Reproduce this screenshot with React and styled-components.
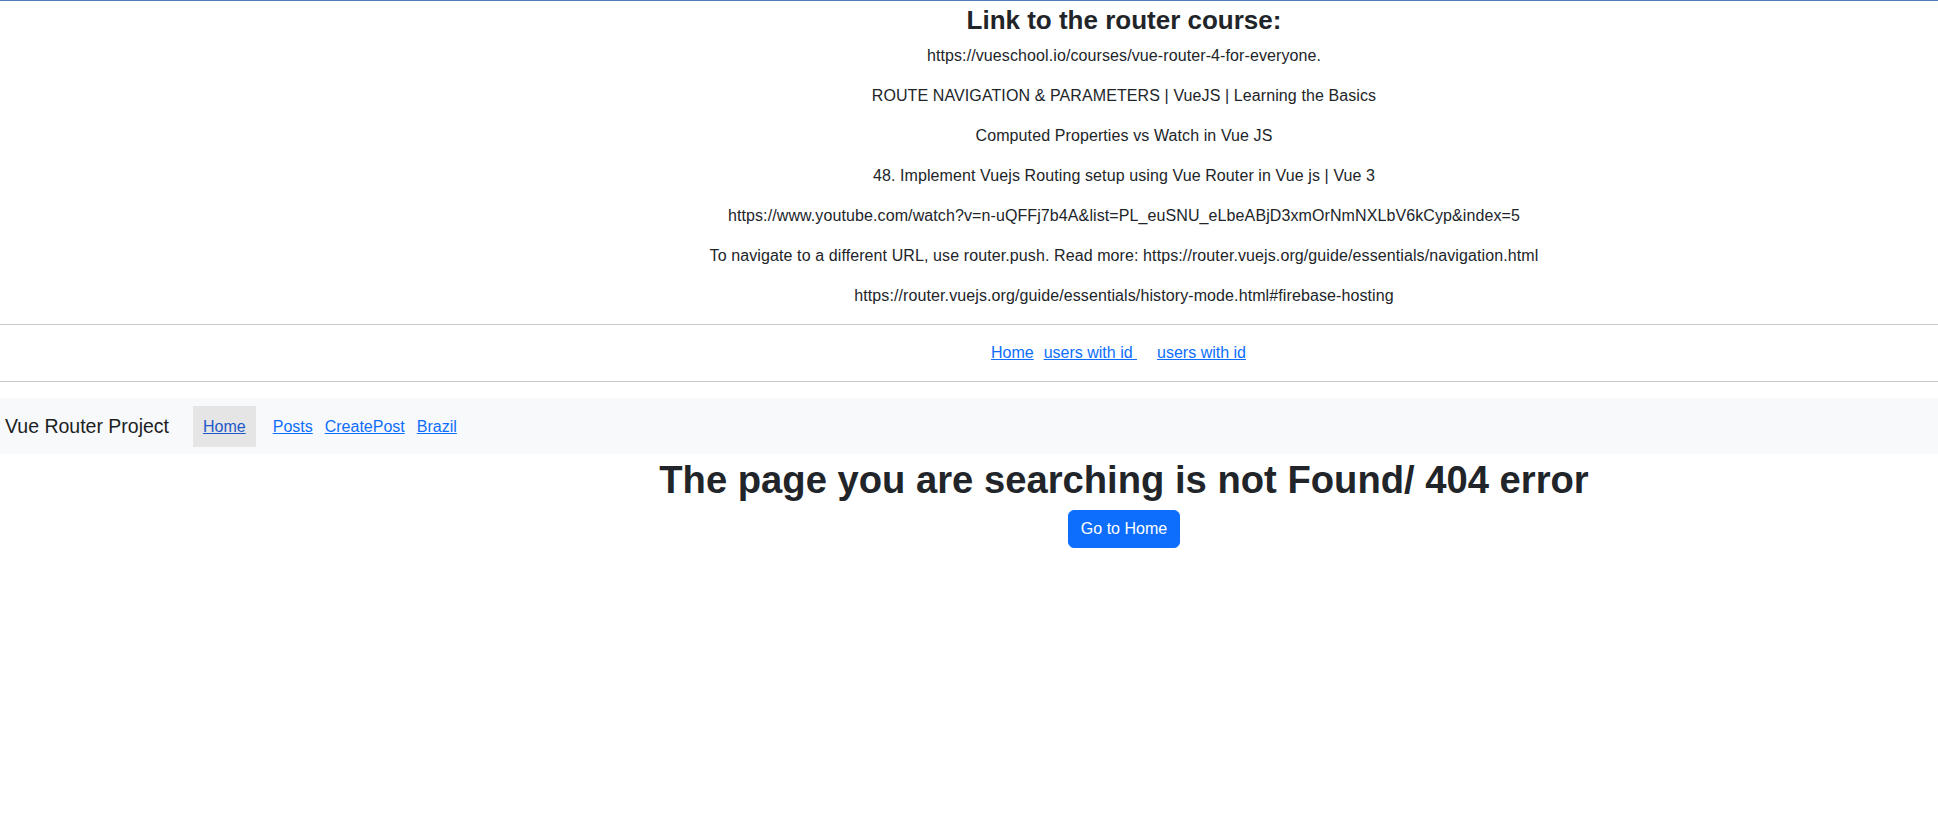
import React from 'react';
import styled, { createGlobalStyle } from 'styled-components';

const GlobalStyle = createGlobalStyle`
  html, body {
    margin: 0;
    padding: 0;
    background: #ffffff;
  }
  body {
    font-family: "Liberation Sans", Arial, sans-serif;
    font-size: 16px;
    line-height: 24px;
    color: #212529;
  }
`;

const Page = styled.div`
  min-height: 818px;
  border-top: 1px solid #4c7bb8;
  background: #ffffff;
`;

const Intro = styled.section`
  padding-left: 310px;
  text-align: center;
`;

const Title = styled.h3`
  margin: 0 0 6px;
  padding-top: 1px;
  font-size: 26px;
  line-height: 36px;
  font-weight: 700;
  color: #212529;
`;

const Note = styled.p`
  margin: 0 0 16px;
  font-size: 16px;
  line-height: 24px;
  letter-spacing: 0.1px;
  color: #212529;
`;

const Rule = styled.hr`
  margin: 16px 0;
  border: 0;
  border-top: 1px solid #c8c9ca;
`;

const LinkRow = styled.div`
  display: flex;
  justify-content: center;
  align-items: baseline;
  gap: 10px;
  padding-left: 299px;
  line-height: 24px;
`;

const TextLink = styled.a`
  color: #0d6efd;
  text-decoration: underline;
  white-space: pre;
  margin-left: ${(p) => (p.$wide ? '10px' : '0')};
`;

const Navbar = styled.nav`
  display: flex;
  align-items: center;
  height: 56px;
  padding: 0 0 0 5px;
  box-sizing: border-box;
  background: #f8f9fa;
`;

const Brand = styled.span`
  font-size: 19.5px;
  line-height: 30px;
  color: #1c1f23;
  margin-right: 24px;
`;

const NavList = styled.div`
  display: flex;
  align-items: center;
  gap: 12px;
`;

const NavItem = styled.a`
  display: block;
  padding: ${(p) => (p.$active ? '8px 10px' : '8px 0')};
  margin-right: ${(p) => (p.$active ? '5px' : '0')};
  line-height: 25px;
  font-size: 16px;
  color: ${(p) => (p.$active ? '#1f58c9' : '#0d6efd')};
  background: ${(p) => (p.$active ? '#e5e5e5' : 'transparent')};
  text-decoration: underline;
`;

const NotFound = styled.section`
  padding-left: 310px;
  text-align: center;
`;

const Heading = styled.h1`
  margin: 0 0 6px;
  padding-top: 2px;
  font-size: 38.2px;
  line-height: 48px;
  font-weight: 700;
  color: #212529;
`;

const Button = styled.button`
  display: inline-block;
  padding: 6px 12px;
  border: 1px solid #0d6efd;
  border-radius: 6px;
  background: #0d6efd;
  color: #ffffff;
  font-family: inherit;
  font-size: 16px;
  line-height: 24px;
  cursor: pointer;
`;

const notes = [
  'https://vueschool.io/courses/vue-router-4-for-everyone.',
  'ROUTE NAVIGATION & PARAMETERS | VueJS | Learning the Basics',
  'Computed Properties vs Watch in Vue JS',
  '48. Implement Vuejs Routing setup using Vue Router in Vue js | Vue 3',
  'https://www.youtube.com/watch?v=n-uQFFj7b4A&list=PL_euSNU_eLbeABjD3xmOrNmNXLbV6kCyp&index=5',
  'To navigate to a different URL, use router.push. Read more: https://router.vuejs.org/guide/essentials/navigation.html',
  'https://router.vuejs.org/guide/essentials/history-mode.html#firebase-hosting',
];

const navLinks = ['Home', 'Posts', 'CreatePost', 'Brazil'];

export default function App() {
  return (
    <Page>
      <GlobalStyle />
      <Intro>
        <Title>Link to the router course:</Title>
        {notes.map((text) => (
          <Note key={text}>{text}</Note>
        ))}
      </Intro>
      <Rule />
      <LinkRow>
        <TextLink href="#">Home</TextLink>
        <TextLink href="#">{'users with id\u00a0'}</TextLink>
        <TextLink href="#" $wide>users with id</TextLink>
      </LinkRow>
      <Rule />
      <Navbar>
        <Brand>Vue Router Project</Brand>
        <NavList>
          {navLinks.map((label, i) => (
            <NavItem key={label} href="#" $active={i === 0}>
              {label}
            </NavItem>
          ))}
        </NavList>
      </Navbar>
      <NotFound>
        <Heading>The page you are searching is not Found/ 404 error</Heading>
        <Button type="button">Go to Home</Button>
      </NotFound>
    </Page>
  );
}
